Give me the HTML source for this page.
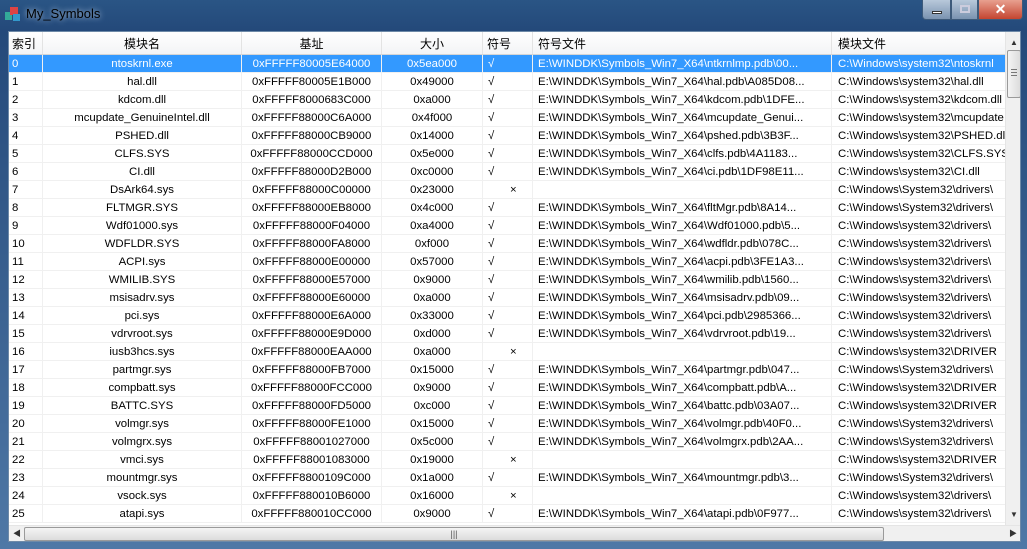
<!DOCTYPE html><html><head><meta charset="utf-8"><style>
*{margin:0;padding:0;box-sizing:border-box}
body{width:1027px;height:549px;overflow:hidden;background:#1e3f6e;font-family:"Liberation Sans","Noto Sans CJK SC",sans-serif;font-size:11.4px;color:#000;position:relative}
.frame{position:absolute;left:0;top:0;width:1027px;height:549px;background:linear-gradient(180deg,#2a5585 0,#24497a 30px,#4f78a6 100%);}
.title{position:absolute;left:26px;top:6px;color:#000;font-size:13px;text-shadow:0 0 6px #cde}
.client{position:absolute;left:8px;top:31px;width:1013px;height:511px;background:#fff;border:1px solid #6e8aa8;overflow:hidden}
.hdr{position:absolute;left:0;top:0;height:23px;width:1000px;background:linear-gradient(#fff,#f3f4f6);border-bottom:1px solid #d5d5d5;font-size:12px}
.hc{position:absolute;top:0;height:22px;line-height:24px;border-right:1px solid #e3e3e3;white-space:nowrap;overflow:hidden}
.row{position:absolute;left:0;height:18px;width:997px;border-bottom:1px solid #f0f0f0}
.row.sel{background:#3399ff;color:#fff}
.c{position:absolute;top:0;height:18px;line-height:18px;white-space:nowrap;overflow:hidden;border-right:1px solid #f0f0f0}
.vs{position:absolute;left:996px;top:0;width:17px;height:493px;background:#f0f0f0;border-left:1px solid #e5e5e5}
.thumb{position:absolute;left:1px;top:18px;width:14px;height:48px;background:linear-gradient(90deg,#f4f4f4,#dcdcdc);border:1px solid #9a9a9a;border-radius:2px}
.hs{position:absolute;left:0;top:493px;width:1013px;height:17px;background:#f0f0f0;border-top:1px solid #e5e5e5}
.hthumb{position:absolute;left:15px;top:1px;width:860px;height:14px;background:linear-gradient(#f4f4f4,#dcdcdc);border:1px solid #9a9a9a;border-radius:2px;text-align:center;font-size:9px;line-height:12px;color:#555}
.btn{position:absolute;top:0;height:20px;border:1px solid #3d5a7a;border-top:none}
</style></head><body>
<div class="frame"></div>
<svg style="position:absolute;left:4px;top:6px" width="18" height="16"><rect x="1" y="6" width="7" height="8" fill="#3a9"/><rect x="6" y="1" width="8" height="8" fill="#d44"/><rect x="9" y="8" width="7" height="7" fill="#39c"/></svg>
<div class="title">My_Symbols</div>
<div class="btn" style="left:922px;width:29px;background:linear-gradient(#b8c8da,#7a93b0);border-radius:0 0 0 4px"><div style="position:absolute;left:9px;top:11px;width:10px;height:3px;background:#fff;border:1px solid #333"></div></div>
<div class="btn" style="left:951px;width:27px;background:linear-gradient(#b8c8da,#7a93b0)"><div style="position:absolute;left:8px;top:5px;width:10px;height:8px;border:2px solid #ccd;"></div></div>
<div class="btn" style="left:978px;width:45px;background:linear-gradient(#e8a090,#c44530);border-radius:0 0 4px 0;color:#fff;text-align:center;font-weight:bold;font-size:14px;line-height:18px">✕</div>
<div class="client">
<div class="hdr">
<div class="hc" style="left:0;width:34px;padding-left:3px">索引</div>
<div class="hc" style="left:34px;width:199px;text-align:center">模块名</div>
<div class="hc" style="left:233px;width:140px;text-align:center">基址</div>
<div class="hc" style="left:373px;width:101px;text-align:center">大小</div>
<div class="hc" style="left:474px;width:50px;padding-left:4px">符号</div>
<div class="hc" style="left:524px;width:299px;padding-left:5px">符号文件</div>
<div class="hc" style="left:823px;width:180px;padding-left:6px">模块文件</div>
</div>
<div id="rows"></div>
<div class="vs"><div style="position:absolute;left:4px;top:6px;font-size:8px;color:#333">▲</div><div class="thumb"><div style="margin:18px auto 0;width:6px;height:7px;border-top:1px solid #777;border-bottom:1px solid #777;position:relative"><div style="position:absolute;top:2px;width:6px;border-top:1px solid #777"></div></div></div><div style="position:absolute;left:4px;top:478px;font-size:8px;color:#333">▼</div></div>
<div class="hs"><div style="position:absolute;left:4px;top:2px;font-size:8px;color:#333">◀</div><div class="hthumb">|||</div><div style="position:absolute;left:1000px;top:2px;font-size:8px;color:#333">▶</div></div>
</div>
<script>
var d=[["ntoskrnl.exe","0xFFFFF80005E64000","0x5ea000",1,"ntkrnlmp.pdb\\00...","system32\\ntoskrnl"],
["hal.dll","0xFFFFF80005E1B000","0x49000",1,"hal.pdb\\A085D08...","system32\\hal.dll"],
["kdcom.dll","0xFFFFF8000683C000","0xa000",1,"kdcom.pdb\\1DFE...","system32\\kdcom.dll"],
["mcupdate_GenuineIntel.dll","0xFFFFF88000C6A000","0x4f000",1,"mcupdate_Genui...","system32\\mcupdate"],
["PSHED.dll","0xFFFFF88000CB9000","0x14000",1,"pshed.pdb\\3B3F...","system32\\PSHED.dll"],
["CLFS.SYS","0xFFFFF88000CCD000","0x5e000",1,"clfs.pdb\\4A1183...","system32\\CLFS.SYS"],
["CI.dll","0xFFFFF88000D2B000","0xc0000",1,"ci.pdb\\1DF98E11...","system32\\CI.dll"],
["DsArk64.sys","0xFFFFF88000C00000","0x23000",0,"","System32\\drivers\\"],
["FLTMGR.SYS","0xFFFFF88000EB8000","0x4c000",1,"fltMgr.pdb\\8A14...","System32\\drivers\\"],
["Wdf01000.sys","0xFFFFF88000F04000","0xa4000",1,"Wdf01000.pdb\\5...","system32\\drivers\\"],
["WDFLDR.SYS","0xFFFFF88000FA8000","0xf000",1,"wdfldr.pdb\\078C...","system32\\drivers\\"],
["ACPI.sys","0xFFFFF88000E00000","0x57000",1,"acpi.pdb\\3FE1A3...","system32\\drivers\\"],
["WMILIB.SYS","0xFFFFF88000E57000","0x9000",1,"wmilib.pdb\\1560...","system32\\drivers\\"],
["msisadrv.sys","0xFFFFF88000E60000","0xa000",1,"msisadrv.pdb\\09...","system32\\drivers\\"],
["pci.sys","0xFFFFF88000E6A000","0x33000",1,"pci.pdb\\2985366...","system32\\drivers\\"],
["vdrvroot.sys","0xFFFFF88000E9D000","0xd000",1,"vdrvroot.pdb\\19...","system32\\drivers\\"],
["iusb3hcs.sys","0xFFFFF88000EAA000","0xa000",0,"","system32\\DRIVER"],
["partmgr.sys","0xFFFFF88000FB7000","0x15000",1,"partmgr.pdb\\047...","System32\\drivers\\"],
["compbatt.sys","0xFFFFF88000FCC000","0x9000",1,"compbatt.pdb\\A...","system32\\DRIVER"],
["BATTC.SYS","0xFFFFF88000FD5000","0xc000",1,"battc.pdb\\03A07...","system32\\DRIVER"],
["volmgr.sys","0xFFFFF88000FE1000","0x15000",1,"volmgr.pdb\\40F0...","System32\\drivers\\"],
["volmgrx.sys","0xFFFFF88001027000","0x5c000",1,"volmgrx.pdb\\2AA...","System32\\drivers\\"],
["vmci.sys","0xFFFFF88001083000","0x19000",0,"","system32\\DRIVER"],
["mountmgr.sys","0xFFFFF8800109C000","0x1a000",1,"mountmgr.pdb\\3...","System32\\drivers\\"],
["vsock.sys","0xFFFFF880010B6000","0x16000",0,"","system32\\drivers\\"],
["atapi.sys","0xFFFFF880010CC000","0x9000",1,"atapi.pdb\\0F977...","system32\\drivers\\"]];
var h="";d.forEach(function(r,i){h+='<div class="row'+(i==0?' sel':'')+'" style="top:'+(23+18*i)+'px">'+
'<div class="c" style="left:0;width:34px;padding-left:3px">'+i+'</div>'+
'<div class="c" style="left:34px;width:199px;text-align:center">'+r[0]+'</div>'+
'<div class="c" style="left:233px;width:140px;text-align:center">'+r[1]+'</div>'+
'<div class="c" style="left:373px;width:101px;text-align:center">'+r[2]+'</div>'+
'<div class="c" style="left:474px;width:50px;padding-left:'+(r[3]?5:27)+'px">'+(r[3]?'√':'×')+'</div>'+
'<div class="c" style="left:524px;width:299px;padding-left:5px">'+(r[4]?'E:\\WINDDK\\Symbols_Win7_X64\\'+r[4]:'')+'</div>'+
'<div class="c" style="left:823px;width:180px;padding-left:6px;border-right:none">C:\\Windows\\'+r[5]+'</div></div>';});
document.getElementById("rows").innerHTML=h;
</script>
</body></html>
